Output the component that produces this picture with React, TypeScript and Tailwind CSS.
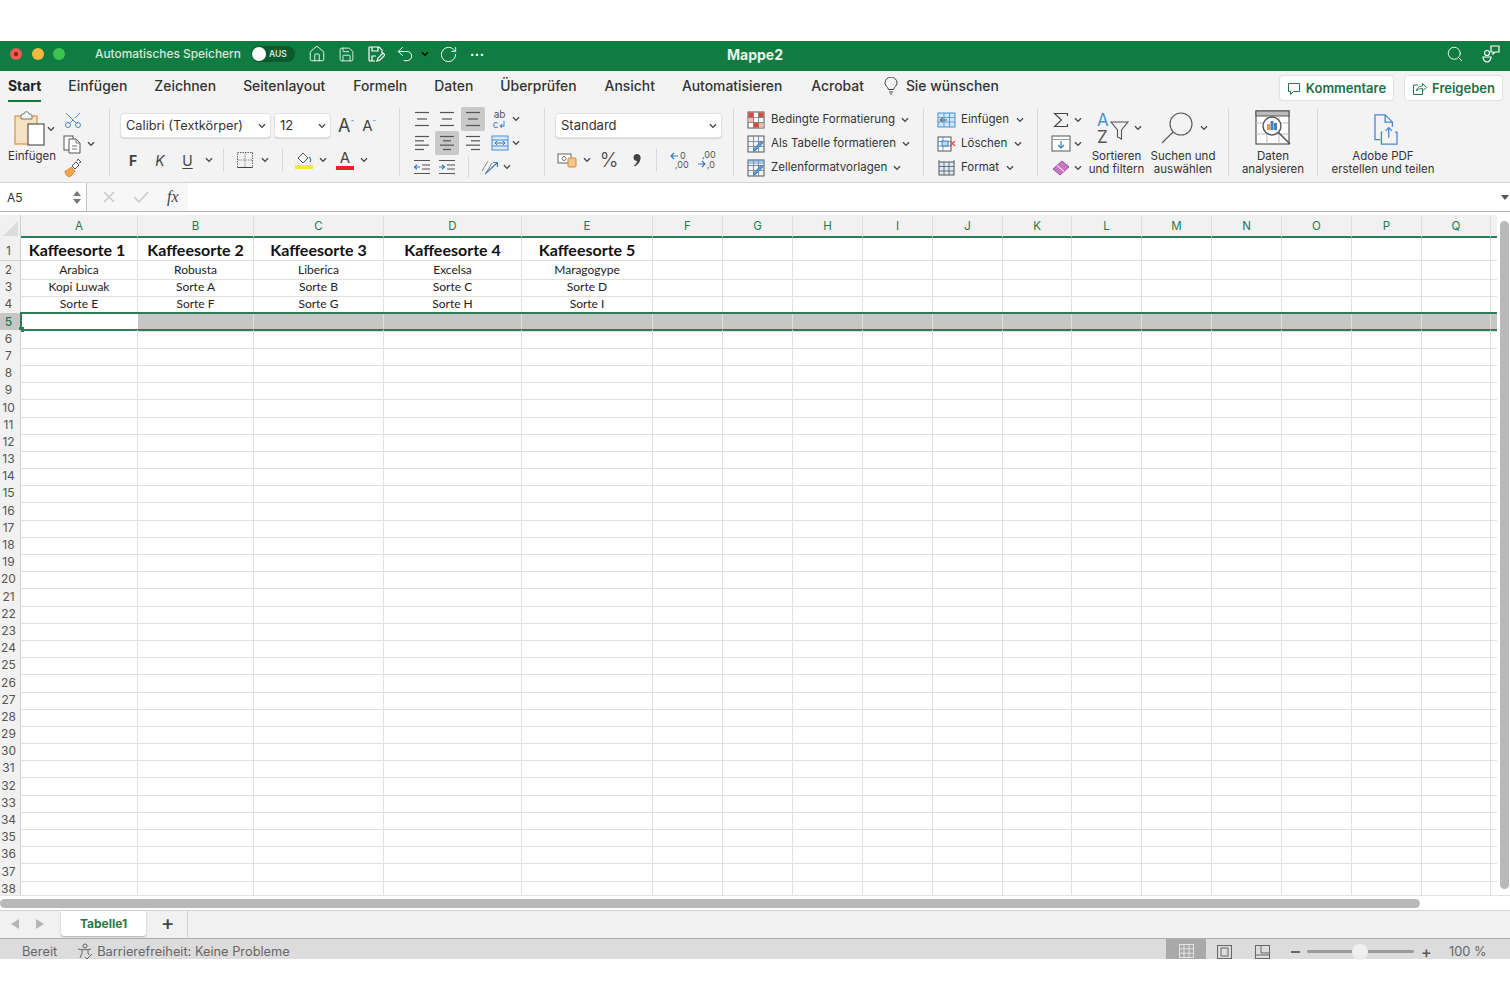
import React from "react";
import { House, Save, Search, Undo2, RotateCw, Scissors } from "lucide-react";

const COLS = "grid grid-cols-[21px_117px_116px_130px_138px_131px_70px_70px_70px_70px_70px_69px_70px_70px_70px_70px_70px_69px_6px]";
const LETTERS = "ABCDEFGHIJKLMNOPQ".split("");

const Chev = ({ className = "" }: { className?: string }) => (
  <svg width="8" height="6" viewBox="0 0 8 6" className={"shrink-0 " + className}>
    <path d="M1 1.2 4 4.4 7 1.2" fill="none" stroke="#444" strokeWidth="1.3" />
  </svg>
);

const Sep = () => <div className="w-px h-[68px] mt-[7px] bg-[#d8d8d8] shrink-0" />;
const MiniSep = () => <div className="w-px h-[22px] bg-[#d8d8d8] shrink-0" />;

function Lines({ rows, active }: { rows: [number, number][]; active?: boolean }) {
  return (
    <div className={"w-[24px] h-[24px] flex items-center justify-center rounded-[2px] " + (active ? "bg-[#c9c9c9]" : "")}>
      <svg width="18" height="18" viewBox="0 0 18 18">
        {rows.map(([x, w], i) => (
          <path key={i} d={`M${x} ${2.5 + i * (13 / Math.max(rows.length - 1, 1))}h${w}`} stroke="#555" strokeWidth="1.2" />
        ))}
      </svg>
    </div>
  );
}

const Indent = ({ out }: { out?: boolean }) => (
  <div className="w-[24px] h-[24px] flex items-center justify-center">
    <svg width="18" height="18" viewBox="0 0 18 18" fill="none">
      <path d="M1 2.5h16M1 15.5h16M9 7h8M9 11h8" stroke="#555" strokeWidth="1.1" />
      {out ? <path d="M7 9H1.5M4 6.8 1.5 9 4 11.2" stroke="#2f7fd0" strokeWidth="1.2" /> : <path d="M1 9h5.5M4 6.8 6.5 9 4 11.2" stroke="#2f7fd0" strokeWidth="1.2" />}
    </svg>
  </div>
);

const Clipboard = () => (
  <svg width="34" height="38" viewBox="0 0 34 38" fill="none">
    <rect x="1" y="6" width="22" height="28" fill="#f6e2c3" stroke="#e0a054" strokeWidth="1.4" />
    <path d="M7 6c0-2 2-2 3-2 0-3 5-3 5 0 1 0 3 0 3 2v3H7z" fill="#f4f4f4" stroke="#777" strokeWidth="1" />
    <rect x="14" y="14" width="16" height="21" fill="#fff" stroke="#555" strokeWidth="1.2" />
  </svg>
);

const CopyIcon = () => (
  <svg width="20" height="20" viewBox="0 0 20 20" fill="none">
    <rect x="1" y="2" width="9" height="14" stroke="#555" fill="#fff" />
    <path d="M6 5h7l4 4v10H6z" stroke="#555" fill="#fff" />
    <path d="M13 5v4h4M9 12h5M9 15h5" stroke="#777" />
  </svg>
);

const Brush = () => (
  <svg width="20" height="20" viewBox="0 0 20 20" fill="none">
    <path d="M2 13c2 0 6-4 6-4l4 4s-3 5-6 6c-2-1-4-3-4-6z" fill="#f0a64c" stroke="#d98a2e" />
    <path d="M9 8l4-4 3 3-4 4z" fill="#fff" stroke="#555" />
    <path d="M14 3l1-2 3 3-2 1" fill="#fff" stroke="#555" />
  </svg>
);

const Grid3 = () => (
  <svg width="18" height="18" viewBox="0 0 18 18" fill="none">
    <rect x="1.5" y="1.5" width="15" height="15" stroke="#666" strokeDasharray="1.5 1" />
    <path d="M9 2v14M2 9h14" stroke="#888" strokeDasharray="1.5 1" />
    <path d="M1.5 16.5h15" stroke="#444" />
  </svg>
);

const StyleIcon = ({ kind }: { kind: 0 | 1 | 2 }) => (
  <svg width="18" height="18" viewBox="0 0 18 18" fill="none">
    <rect x="1" y="1" width="16" height="16" fill={kind === 0 ? "#fff" : "#eef4fb"} stroke="#555" />
    {kind === 0 && <path d="M1.5 1.5h5v5h-5zM11.5 1.5h5v5h-5zM6.5 11.5h5v5h-5z" fill="#e2443f" />}
    {kind === 0 && <path d="M1.5 6.5h5v5h-5zM11.5 11.5h5v5h-5z" fill="#f3b6b3" />}
    <path d="M1 6.5h16M1 11.5h16M6.5 1v16M11.5 1v16" stroke="#777" strokeWidth=".8" />
    {kind !== 0 && <path d="M6 15 14 6l2 2-8 8z" fill="#5b9bd5" stroke="#3d78ad" strokeWidth=".8" />}
    {kind === 2 && <path d="M1 1h16v4H1z" fill="#5b9bd5" opacity=".5" />}
  </svg>
);

const CellIcon = ({ kind }: { kind: 0 | 1 | 2 }) => (
  <svg width="19" height="18" viewBox="0 0 19 18" fill="none">
    {kind === 0 && (
      <>
        <rect x="1" y="2" width="17" height="14" fill="#cfe4f7" stroke="#4a90d0" />
        <path d="M1 6.5h17M1 11h17M7 2v14M12.5 2v14" stroke="#4a90d0" strokeWidth=".8" />
        <path d="M3 9h7M6 7 3 9l3 2" stroke="#555" />
      </>
    )}
    {kind === 1 && (
      <>
        <rect x="1" y="2" width="13" height="14" fill="#fff" stroke="#555" />
        <path d="M1 6.5h13M1 11h13M6 2v14" stroke="#4a90d0" strokeWidth=".9" />
        <rect x="5" y="6" width="6" height="5" fill="#bcd9f3" stroke="#2f7fd0" />
        <path d="M13 6l5 5M18 6l-5 5" stroke="#e0504b" strokeWidth="1.3" />
      </>
    )}
    {kind === 2 && (
      <>
        <rect x="2" y="3" width="15" height="13" fill="#dbeaf8" stroke="#555" />
        <path d="M2 1v2M17 1v2M2 7.5h15M2 12h15M7 3v13M12 3v13" stroke="#555" strokeWidth=".8" />
      </>
    )}
  </svg>
);

const Select = ({ label, className, text }: { label: string; className: string; text: string }) => (
  <div className={"h-[25px] bg-white rounded-[4px] border border-[#e2e2e2] shadow-[0_1px_1px_rgba(0,0,0,0.12)] flex items-center justify-between pl-[5px] pr-[4px] " + className}>
    <span className={text}>{label}</span>
    <Chev />
  </div>
);

const IconCell = ({ children, className = "" }: { children: React.ReactNode; className?: string }) => (
  <div className={"flex items-center justify-center shrink-0 " + className}>{children}</div>
);

const StyleRow = ({ kind, label, gap }: { kind: 0 | 1 | 2; label: string; gap: string }) => (
  <div className="h-[24px] flex items-center">
    <StyleIcon kind={kind} />
    <span className="ml-[6px] text-[11.5px] text-[#333] whitespace-nowrap">{label}</span>
    <Chev className={gap} />
  </div>
);

const CellRow = ({ kind, label, gap }: { kind: 0 | 1 | 2; label: string; gap: string }) => (
  <div className="h-[24px] flex items-center">
    <CellIcon kind={kind} />
    <span className="ml-[5px] text-[11.5px] text-[#333] whitespace-nowrap">{label}</span>
    <Chev className={gap} />
  </div>
);

function Ribbon() {
  return (
    <div className="h-[82px] bg-[#f3f3f3] flex border-b border-[#d4d4d4] text-[#333]">
      {/* clipboard */}
      <div className="w-[109px] flex shrink-0">
        <div className="w-[63px] pt-[10px] pl-[8px]">
          <div className="flex items-center h-[36px] pl-[6px]">
            <Clipboard />
            <Chev className="-ml-[1px]" />
          </div>
          <div className="text-[11.5px] mt-[2px] leading-[14px]">Einfügen</div>
        </div>
        <div className="pt-[7px]">
          <div className="h-[24px] flex items-center"><Scissors size={20} strokeWidth={1.1} color="#3f7fbf" className="-rotate-90" /></div>
          <div className="h-[24px] flex items-center"><CopyIcon /><Chev className="ml-[4px]" /></div>
          <div className="h-[24px] flex items-center"><Brush /></div>
        </div>
      </div>
      <Sep />
      {/* font */}
      <div className="w-[289px] pl-[10px] pt-[12px] shrink-0">
        <div className="flex items-center">
          <Select label="Calibri (Textkörper)" className="w-[151px]" text="text-[12.8px]" />
          <Select label="12" className="w-[57px] ml-[3px]" text="text-[13px]" />
          <span className="ml-[7px] text-[18px] leading-none text-[#444] relative">A<sup className="text-[9px] text-[#3f7fbf]">ˆ</sup></span>
          <span className="ml-[8px] text-[15px] leading-none text-[#444] relative">A<sup className="text-[9px] text-[#3f7fbf]">ˇ</sup></span>
        </div>
        <div className="flex items-center mt-[10px] h-[24px] text-[#444]">
          <IconCell className="w-[26px]"><span className="text-[14px] font-bold">F</span></IconCell>
          <IconCell className="w-[28px]"><span className="text-[14px] italic">K</span></IconCell>
          <IconCell className="w-[27px]"><span className="text-[14px] underline underline-offset-2">U</span></IconCell>
          <IconCell className="w-[15px]"><Chev /></IconCell>
          <div className="ml-[7px]"><MiniSep /></div>
          <IconCell className="w-[24px] ml-[9px]"><Grid3 /></IconCell>
          <IconCell className="w-[16px]"><Chev /></IconCell>
          <div className="ml-[9px]"><MiniSep /></div>
          <IconCell className="w-[24px] ml-[9px] flex-col">
            <svg width="18" height="13" viewBox="0 0 18 13" fill="none"><path d="M3 7l5-5 5 5-5 5z" stroke="#555" fill="#fff" /><path d="M14 6c2 1 2 4 1 5" stroke="#2f7fd0" strokeWidth="1.3" /></svg>
            <div className="w-[18px] h-[4px] mt-[1px] bg-[#f5ec2f]" />
          </IconCell>
          <IconCell className="w-[14px]"><Chev /></IconCell>
          <IconCell className="w-[24px] ml-[3px] flex-col">
            <span className="text-[15px] leading-[14px]">A</span>
            <div className="w-[18px] h-[4px] mt-[1px] bg-[#e5202a]" />
          </IconCell>
          <IconCell className="w-[14px]"><Chev /></IconCell>
        </div>
      </div>
      <Sep />
      {/* align */}
      <div className="w-[144px] pt-[6px] pl-[10px] shrink-0">
        <div className="flex items-center h-[24px]">
          <Lines rows={[[2, 14], [4, 10], [2, 14]]} />
          <div className="w-[1px]" />
          <Lines rows={[[2, 14], [4, 10], [2, 14]]} />
          <div className="w-[2px]" />
          <Lines active rows={[[2, 14], [4, 10], [2, 14]]} />
          <div className="ml-[5px] w-[19px] text-center text-[10px] leading-[10px] text-[#555]">ab<br /><span className="text-[#3f7fbf]">c↲</span></div>
          <Chev className="ml-[3px]" />
        </div>
        <div className="flex items-center h-[24px]">
          <Lines rows={[[2, 14], [2, 9], [2, 14], [2, 9]]} />
          <div className="w-[1px]" />
          <Lines active rows={[[2, 14], [5, 8], [2, 14], [5, 8]]} />
          <div className="w-[2px]" />
          <Lines rows={[[2, 14], [7, 9], [2, 14], [7, 9]]} />
          <div className="ml-[5px] w-[19px] flex justify-center">
            <svg width="18" height="16" viewBox="0 0 18 16" fill="none"><rect x="1" y="1" width="16" height="14" fill="#dbeaf8" stroke="#4a90d0" /><path d="M1 5h16M1 11h16" stroke="#4a90d0" /><path d="M4 8h10M6 6 4 8l2 2M12 6l2 2-2 2" stroke="#2f6fb0" strokeWidth=".9" /></svg>
          </div>
          <Chev className="ml-[3px]" />
        </div>
        <div className="flex items-center h-[24px]">
          <Indent out />
          <div className="w-[1px]" />
          <Indent />
          <div className="ml-[9px]"><MiniSep /></div>
          <div className="ml-[11px] w-[20px] flex justify-center">
            <svg width="20" height="18" viewBox="0 0 20 18" fill="none"><path d="M2 13 8 3M6 15l6-10" stroke="#888" /><path d="M5 16 17 5M13 4.500h4.500V9" stroke="#3f7fbf" strokeWidth="1.2" /></svg>
          </div>
          <Chev className="ml-[3px]" />
        </div>
      </div>
      <Sep />
      {/* number */}
      <div className="w-[188px] pl-[10px] pt-[12px] shrink-0">
        <Select label="Standard" className="w-[167px]" text="text-[13px]" />
        <div className="flex items-center mt-[10px] h-[24px]">
          <IconCell className="w-[24px]">
            <svg width="20" height="16" viewBox="0 0 20 16" fill="none"><rect x="1" y="2" width="13" height="9" stroke="#666" fill="#fff" /><circle cx="7" cy="6.500" r="2" stroke="#777" /><rect x="11" y="6" width="8" height="9" rx="1" fill="#f6c78d" stroke="#d98a2e" /></svg>
          </IconCell>
          <IconCell className="w-[16px]"><Chev /></IconCell>
          <IconCell className="w-[24px] ml-[2px]"><span className="text-[20px] font-light text-[#444]">%</span></IconCell>
          <IconCell className="w-[24px] ml-[4px]">
            <svg width="10" height="15" viewBox="0 0 10 15"><path d="M5 1a3.500 3.500 0 0 1 3.600 3.600c0 4-2.600 7.400-6 9l-.7-1c1.800-1.200 3-2.800 3.200-4.600A3.400 3.400 0 0 1 5 1z" fill="#444" /></svg>
          </IconCell>
          <div className="ml-[7px]"><MiniSep /></div>
          <IconCell className="w-[24px] ml-[10px]">
            <svg width="20" height="20" viewBox="0 0 20 20" fill="none"><path d="M9 6H2M5 3 2 6l3 3" stroke="#2f7fd0" strokeWidth="1.2" /><text x="11" y="9" fontSize="9" fill="#555">0</text><text x="6" y="18" fontSize="9" fill="#555">,00</text></svg>
          </IconCell>
          <IconCell className="w-[24px] ml-[3px]">
            <svg width="20" height="20" viewBox="0 0 20 20" fill="none"><path d="M2 14h7M6 11l3 3-3 3" stroke="#2f7fd0" strokeWidth="1.2" /><text x="6" y="8" fontSize="9" fill="#555">,00</text><text x="11" y="18" fontSize="9" fill="#555">,0</text></svg>
          </IconCell>
        </div>
      </div>
      <Sep />
      {/* styles */}
      <div className="w-[189px] pl-[13px] pt-[7px] shrink-0">
        <StyleRow kind={0} label="Bedingte Formatierung" gap="ml-[6px]" />
        <StyleRow kind={1} label="Als Tabelle formatieren" gap="ml-[6px]" />
        <StyleRow kind={2} label="Zellenformatvorlagen" gap="ml-[6px]" />
      </div>
      <Sep />
      {/* cells */}
      <div className="w-[113px] pl-[13px] pt-[7px] shrink-0">
        <CellRow kind={0} label="Einfügen" gap="ml-[7px]" />
        <CellRow kind={1} label="Löschen" gap="ml-[7px]" />
        <CellRow kind={2} label="Format" gap="ml-[7px]" />
      </div>
      <Sep />
      {/* editing */}
      <div className="w-[190px] flex shrink-0">
        <div className="w-[45px] pl-[12px] pt-[7px] shrink-0">
          <div className="h-[24px] flex items-center">
            <svg width="18" height="18" viewBox="0 0 18 18" fill="none" className="ml-[2px] mr-[4px]"><path d="M15.500 5V2.500H2.500L9.500 9l-7 6.500h13V13" stroke="#444" strokeWidth="1.1" /></svg>
            <Chev />
          </div>
          <div className="h-[24px] flex items-center">
            <svg width="20" height="18" viewBox="0 0 20 18" fill="none" className="ml-[1px] mr-[3px]"><rect x="1" y="1" width="18" height="15" stroke="#555" fill="#fff" /><path d="M1 4.500h18" stroke="#999" /><path d="M10 6v7M7 10l3 3 3-3" stroke="#2f7fd0" strokeWidth="1.2" /></svg>
            <Chev />
          </div>
          <div className="h-[24px] flex items-center">
            <svg width="20" height="18" viewBox="0 0 20 18" fill="none" className="ml-[1px] mr-[3px]"><path d="M2 10 11 2l7 6-9 8z" fill="#c779c6" stroke="#9d4f9d" /><path d="M6 6.500l7 6" stroke="#fff" /></svg>
            <Chev />
          </div>
        </div>
        <div className="w-[67px] pt-[9px] flex flex-col items-center shrink-0">
          <div className="h-[36px] flex items-center pl-[4px]">
            <svg width="36" height="36" viewBox="0 0 36 36" fill="none">
              <text x="1" y="16" fontSize="17" fill="#4a90d0">A</text>
              <text x="1" y="33" fontSize="17" fill="#555">Z</text>
              <path d="M15 12h17l-6.500 8v9l-4-2v-7z" stroke="#555" strokeWidth="1.1" />
            </svg>
            <Chev className="ml-[2px]" />
          </div>
          <div className="text-[11.5px] leading-[13px] mt-[4px] text-center whitespace-nowrap">Sortieren<br />und filtern</div>
        </div>
        <div className="w-[66px] pt-[9px] flex flex-col items-center shrink-0">
          <div className="h-[36px] flex items-center pl-[2px]">
            <svg width="36" height="36" viewBox="0 0 36 36" fill="none"><circle cx="21" cy="14" r="11" stroke="#555" strokeWidth="1.1" /><path d="M13 22 2 33" stroke="#555" strokeWidth="1.1" /></svg>
            <Chev className="ml-[4px]" />
          </div>
          <div className="text-[11.5px] leading-[13px] mt-[4px] text-center whitespace-nowrap">Suchen und<br />auswählen</div>
        </div>
      </div>
      <Sep />
      {/* analyse */}
      <div className="w-[88px] pt-[9px] flex flex-col items-center shrink-0">
        <div className="h-[36px]">
          <svg width="36" height="36" viewBox="0 0 36 36" fill="none">
            <rect x="1" y="1" width="33" height="33" fill="#fff" stroke="#555" strokeWidth="1.2" />
            <rect x="1" y="1" width="33" height="5" fill="#bbb" stroke="#555" />
            <path d="M1 13h33M1 24h33M12 6v28M24 6v28" stroke="#bbb" />
            <circle cx="17" cy="16" r="9" fill="#fff" stroke="#555" strokeWidth="1.4" />
            <path d="M23.500 22.500 35 34" stroke="#555" strokeWidth="1.6" />
            <rect x="12" y="14" width="3" height="6" fill="#e59a3c" /><rect x="15.500" y="11" width="3" height="9" fill="#3f7fbf" /><rect x="19" y="13" width="3" height="7" fill="#3f7fbf" />
          </svg>
        </div>
        <div className="text-[11.5px] leading-[13px] mt-[4px] text-center whitespace-nowrap">Daten<br />analysieren</div>
      </div>
      <Sep />
      {/* adobe */}
      <div className="w-[130px] pt-[9px] flex flex-col items-center shrink-0">
        <div className="h-[36px] flex items-end pl-[5px]">
          <svg width="28" height="33" viewBox="0 0 30 36" fill="none" stroke="#4a86d8" strokeWidth="1.4">
            <path d="M9 29H3V2h11l8 8v5M14 2v8h8" />
            <path d="M11 21h-1v13h17V21h-2" />
            <path d="M18 27V16M14.500 19.500 18 16l3.500 3.500" />
          </svg>
        </div>
        <div className="text-[11.5px] leading-[13px] mt-[4px] text-center whitespace-nowrap">Adobe PDF<br />erstellen und teilen</div>
      </div>
    </div>
  );
}

const Cell = ({ children, className = "" }: { children?: React.ReactNode; className?: string }) => (
  <div className={"border-r border-b border-[#e0e0e0] flex items-center justify-center whitespace-nowrap overflow-hidden " + className}>{children}</div>
);

const DATA: string[][] = [
  ["Arabica", "Robusta", "Liberica", "Excelsa", "Maragogype"],
  ["Kopi Luwak", "Sorte A", "Sorte B", "Sorte C", "Sorte D"],
  ["Sorte E", "Sorte F", "Sorte G", "Sorte H", "Sorte I"],
];

function Sheet() {
  const blanks = Array.from({ length: 13 });
  return (
    <div className="h-[681px] overflow-hidden bg-white relative pr-[13px] font-['Lato',sans-serif]">
      <div className={COLS + " h-[24px] pt-[1px] font-['Inter',sans-serif]"}>
        <div className="bg-[#f1f1f1] flex items-end justify-end pr-[2px] pb-[2px] border-r border-[#d0d0d0]">
          <div className="w-0 h-0 border-l-[15px] border-l-transparent border-b-[15px] border-b-[#dcdcdc]" />
        </div>
        {LETTERS.map((l) => (
          <div key={l} className="bg-[#f1f1f1] border-r border-[#dedede] border-b-2 border-b-[#2f7d57] flex items-center justify-center pt-[3px] text-[11.5px] text-[#1b7a4e]">{l}</div>
        ))}
        <div className="bg-[#f1f1f1] border-b-2 border-b-[#2f7d57]" />
      </div>
      <div className={COLS + " h-[23px]"}>
        <div className="bg-[#f1f1f1] border-r border-b border-[#d0d0d0] flex items-end justify-center pr-[3px] text-[12px] text-[#555] font-['Inter',sans-serif]">1</div>
        {["Kaffeesorte 1", "Kaffeesorte 2", "Kaffeesorte 3", "Kaffeesorte 4", "Kaffeesorte 5"].map((t, i) => (
          <Cell key={t} className={"pt-[1px] text-[16px] font-bold text-[#111] " + (i === 0 ? "pr-[4px]" : "")}>{t}</Cell>
        ))}
        {LETTERS.slice(5).map((l) => <Cell key={l} />)}
        <Cell className="border-r-0" />
      </div>
      {Array.from({ length: 37 }).map((_, i) => {
        const n = i + 2;
        const row = DATA[i];
        const sel = n === 5;
        return (
          <div key={n} className={COLS + " h-[17.2px] relative " + (sel ? "bg-[#c6c7c5]" : "")}>
            <div className={"border-r border-b border-[#d0d0d0] flex items-center justify-center pr-[3px] text-[12px] font-['Inter',sans-serif] " + (sel ? "bg-[#c6c7c5] text-[#1b7a4e] font-medium" : "bg-[#f1f1f1] text-[#555]")}>{n}</div>
            {sel && <div className="bg-white" />}
            {Array.from({ length: sel ? 4 : 5 }).map((_, c) => (
              <Cell key={c} className="text-[12px] text-[#222]">{row ? row[c] : null}</Cell>
            ))}
            {blanks.map((_, c) => <Cell key={c} className={c === 12 ? "border-r-0" : ""} />)}
            {sel && (
              <div className="absolute left-[20px] right-0 -top-[1px] -bottom-[1px] border-y-2 border-[#2f7d57]">
                <div className="absolute -left-[1px] -bottom-[3px] w-[5px] h-[5px] bg-[#2f7d57]" />
                <div className="absolute left-0 top-0 bottom-0 w-[2px] bg-[#2f7d57]" />
              </div>
            )}
          </div>
        );
      })}
      <div className="absolute right-[1px] top-[7px] w-[9px] h-[668px] rounded-full bg-[#b9b9b9]" />
    </div>
  );
}

export default function App() {
  return (
    <div className="w-[1510px] h-[1000px] bg-white pt-[41px] overflow-hidden font-['Inter',sans-serif]">
      {/* title bar */}
      <div className="h-[30px] bg-[#107c41] flex items-center pb-[4px] text-white relative">
        <div className="w-[12px] h-[12px] rounded-full bg-[#ef5a52] ml-[10px] flex items-center justify-center"><div className="w-[4px] h-[4px] rounded-full bg-[#8a1a16]" /></div>
        <div className="w-[12px] h-[12px] rounded-full bg-[#f6b73c] ml-[10px]" />
        <div className="w-[12px] h-[12px] rounded-full bg-[#3cc44f] ml-[9px]" />
        <span className="ml-[30px] text-[11.9px] font-medium text-[#d5e8dc] whitespace-nowrap">Automatisches Speichern</span>
        <div className="ml-[10px] w-[44px] h-[16px] rounded-full bg-[#0c5a30] flex items-center pl-[1px]">
          <div className="w-[14px] h-[14px] rounded-full bg-white" />
          <span className="ml-[3px] text-[8.5px] font-semibold text-[#d5e8dc]">AUS</span>
        </div>
        <House size={18} strokeWidth={1.2} className="ml-[13px]" />
        <Save size={17} strokeWidth={1.2} className="ml-[12px]" />
        <svg width="18" height="18" viewBox="0 0 18 18" fill="none" stroke="#fff" strokeWidth="1.2" className="ml-[12px]">
          <path d="M8 16H3a1 1 0 0 1-1-1V3a1 1 0 0 1 1-1h9l3 3v3" /><path d="M5 2v4h6V2M5 16v-5h4" /><path d="M10 16l1-3 5-5 2 2-5 5z" />
        </svg>
        <Undo2 size={20} strokeWidth={1.2} className="ml-[10px]" />
        <Chev className="ml-[6px] brightness-[5] invert" />
        <RotateCw size={19} strokeWidth={1.2} className="ml-[10px]" />
        <span className="ml-[12px] text-[13px] font-bold leading-none tracking-[0.5px]">···</span>
        <span className="absolute left-[727px] text-[14px] font-bold text-[#e6f2ea]">Mappe2</span>
        <Search size={18} strokeWidth={1.2} className="absolute left-[1446px]" />
        <svg width="20" height="20" viewBox="0 0 20 20" fill="none" stroke="#fff" strokeWidth="1.2" className="absolute left-[1481px]">
          <circle cx="6" cy="9" r="2.500" /><path d="M2 13h8c0 3-2 5-4 5s-4-2-4-5z" /><path d="M10 2h8v6h-4l-2 2V8h-2z" />
        </svg>
      </div>
      {/* tabs */}
      <div className="h-[30px] bg-[#f3f3f3] flex items-center relative text-[13.9px] text-[#333] font-medium">
        <div className="ml-[8px] relative font-bold text-[#222]">Start<div className="absolute left-0 right-0 top-[24px] h-[2px] bg-[#107c41]" /></div>
        <span className="ml-[27px]">Einfügen</span>
        <span className="ml-[27px]">Zeichnen</span>
        <span className="ml-[27px]">Seitenlayout</span>
        <span className="ml-[28px]">Formeln</span>
        <span className="ml-[27px]">Daten</span>
        <span className="ml-[27px]">Überprüfen</span>
        <span className="ml-[28px]">Ansicht</span>
        <span className="ml-[27px]">Automatisieren</span>
        <span className="ml-[29px]">Acrobat</span>
        <svg width="14" height="18" viewBox="0 0 14 18" fill="none" stroke="#444" className="ml-[20px]"><path d="M4.500 12.500C4 10 1 9 1 6a6 6 0 0 1 12 0c0 3-3 4-3.500 6.500zM5 15h4M6 17h2" /></svg>
        <span className="ml-[8px]">Sie wünschen</span>
        <div className="absolute left-[1280px] top-[5px] w-[113px] h-[24px] pt-[1px] bg-white rounded-[3px] shadow-[0_0_2px_rgba(0,0,0,0.25)] flex items-center justify-center text-[13px] font-semibold text-[#1f6f48]">
          <svg width="14" height="14" viewBox="0 0 14 14" fill="none" stroke="#1f7a4f" className="mr-[5px]"><path d="M1.500 1.500h11v8h-6l-3 3v-3h-2z" /></svg>
          Kommentare
        </div>
        <div className="absolute left-[1405px] top-[5px] w-[97px] h-[24px] pt-[1px] bg-white rounded-[3px] shadow-[0_0_2px_rgba(0,0,0,0.25)] flex items-center justify-center text-[13px] font-semibold text-[#1f6f48]">
          <svg width="15" height="14" viewBox="0 0 15 14" fill="none" stroke="#1f7a4f" className="mr-[5px]"><path d="M6 3H1.500v9.500h9V9" /><path d="M4.500 9c0-3 3-5 6-5V1.500l4 4-4 3.500V6.500c-3 0-5 1-6 2.500z" /></svg>
          Freigeben
        </div>
      </div>
      <Ribbon />
      {/* formula bar */}
      <div className="h-[29px] bg-white border-b border-[#b5b5b5] flex items-center">
        <div className="w-[87px] h-full bg-white border-r border-[#c4c4c4] flex items-center justify-between pt-[1px] pl-[7px] pr-[5px] shrink-0">
          <span className="text-[12px] text-[#333]">A5</span>
          <div className="flex flex-col gap-[3px]">
            <div className="w-0 h-0 border-x-[4px] border-x-transparent border-b-[5px] border-b-[#777]" />
            <div className="w-0 h-0 border-x-[4px] border-x-transparent border-t-[5px] border-t-[#777]" />
          </div>
        </div>
        <div className="w-[101px] h-full bg-[#f7f7f7] flex items-center shrink-0">
          <svg width="14" height="14" viewBox="0 0 14 14" stroke="#c9c9c9" strokeWidth="1.5" className="ml-[15px]"><path d="M2 2l10 10M12 2 2 12" /></svg>
          <svg width="16" height="14" viewBox="0 0 16 14" stroke="#c9c9c9" strokeWidth="1.5" fill="none" className="ml-[17px]"><path d="M1 7l5 5L15 2" /></svg>
          <span className="ml-[18px] text-[16px] italic text-[#444] font-['Liberation_Serif',serif]">fx</span>
        </div>
        <div className="flex-1" />
        <div className="w-0 h-0 mr-[1px] border-x-[4px] border-x-transparent border-t-[5px] border-t-[#555]" />
      </div>
      <div className="h-[2px] bg-white" />
      <Sheet />
      {/* horizontal scrollbar */}
      <div className="h-[15px] bg-white border-t border-[#e4e4e4] flex items-center">
        <div className="w-[1420px] h-[9px] rounded-full bg-[#b9b9b9]" />
      </div>
      {/* sheet tabs */}
      <div className="h-[28px] bg-[#f1f1f1] border-t border-[#d4d4d4] flex items-start relative">
        <div className="h-[26px] flex items-center">
          <div className="ml-[11px] w-0 h-0 border-y-[5px] border-y-transparent border-r-[8px] border-r-[#b5b5b5]" />
          <div className="ml-[17px] w-0 h-0 border-y-[5px] border-y-transparent border-l-[8px] border-l-[#b5b5b5]" />
        </div>
        <div className="ml-[17px] w-[85px] h-[25px] pt-[1px] bg-white rounded-b-[3px] shadow-[0_1px_2px_rgba(0,0,0,0.3)] flex items-center justify-center text-[12px] font-bold text-[#1f7a4f]">Tabelle1</div>
        <span className="ml-[15px] h-[24px] flex items-center text-[20px] font-medium leading-none text-[#444]">+</span>
        <div className="ml-[13px] w-px h-[26px] bg-[#d0d0d0]" />
      </div>
      {/* status */}
      <div className="h-[21px] bg-[#dcdcdc] border-t border-[#adadad] flex items-center pt-[5px] text-[12.8px] text-[#666] relative">
        <span className="ml-[22px]">Bereit</span>
        <svg width="17" height="17" viewBox="0 0 17 17" fill="none" stroke="#666" className="ml-[20px]"><circle cx="8" cy="3" r="2" /><path d="M1 6c3 1 9 1 13 0M5 7v3l-2 5M11 7v3l1 2M8 14l2 2 5-5" /></svg>
        <span className="ml-[3px]">Barrierefreiheit: Keine Probleme</span>
        <div className="absolute left-[1166px] top-0 w-[40px] h-full pt-[3px] bg-[#a9a9a9] flex items-center justify-center">
          <svg width="15" height="14" viewBox="0 0 15 14" fill="none" stroke="#e4e4e4"><rect x=".5" y=".5" width="14" height="13" /><path d="M5 0v14M10 0v14M0 4.800h15M0 9.200h15" /></svg>
        </div>
        <svg width="15" height="14" viewBox="0 0 15 14" fill="none" stroke="#666" className="absolute left-[1217px]"><rect x=".5" y=".5" width="14" height="13" /><rect x="4" y="3" width="7" height="8" /></svg>
        <svg width="15" height="14" viewBox="0 0 15 14" fill="none" stroke="#666" className="absolute left-[1255px]"><rect x=".5" y=".5" width="14" height="13" /><path d="M6 0v8h9M1 10h13" /></svg>
        <div className="absolute left-[1291px] w-[9px] h-[2px] bg-[#666]" />
        <div className="absolute left-[1307px] w-[107px] h-[3px] rounded-full bg-[#9b9b9b]" />
        <div className="absolute left-[1352px] w-[16px] h-[16px] rounded-full bg-[#efefef]" />
        <span className="absolute left-[1421px] text-[16px] font-medium leading-none text-[#555]">+</span>
        <span className="absolute left-[1449px]">100 %</span>
      </div>
    </div>
  );
}
